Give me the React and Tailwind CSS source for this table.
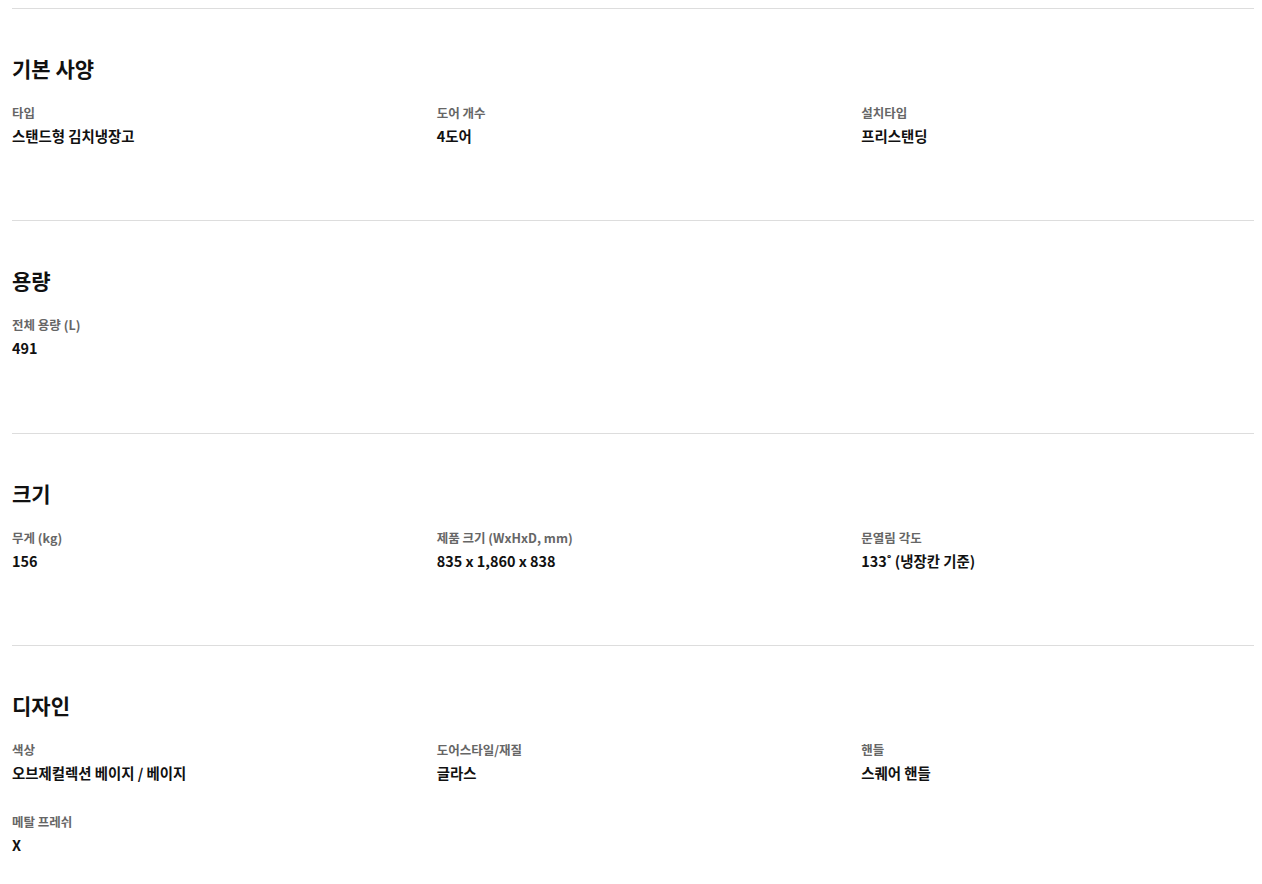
const specs = [
  {
    title: '기본 사양',
    items: [
      ['타입', '스탠드형 김치냉장고'],
      ['도어 개수', '4도어'],
      ['설치타입', '프리스탠딩'],
    ],
  },
  {
    title: '용량',
    items: [['전체 용량 (L)', '491']],
  },
  {
    title: '크기',
    items: [
      ['무게 (kg)', '156'],
      ['제품 크기 (WxHxD, mm)', '835 x 1,860 x 838'],
      ['문열림 각도', '133˚ (냉장칸 기준)'],
    ],
  },
  {
    title: '디자인',
    items: [
      ['색상', '오브제컬렉션 베이지 / 베이지'],
      ['도어스타일/재질', '글라스'],
      ['핸들', '스퀘어 핸들'],
      ['메탈 프레쉬', 'X'],
    ],
  },
]

export default function App() {
  return (
    <div
      className="bg-white pl-3 pr-2 pt-2 text-black"
      style={{ fontFamily: '"Noto Sans CJK KR", "Noto Sans", sans-serif' }}
    >
      {specs.map(section => (
        <section key={section.title} className="border-t border-[#dddddd] pt-[44px] pb-[73.33px]">
          <h2 className="text-[21px] font-bold leading-[30px] text-[#111]">{section.title}</h2>
          <dl className="mt-5 grid grid-cols-3 gap-x-[32px] gap-y-7">
            {section.items.map(([label, value]) => (
              <div key={label}>
                <dt className="text-[12.5px] font-semibold leading-5 text-[#666]">{label}</dt>
                <dd className="mt-[2px] text-[14.4px] font-bold leading-[22px] text-[#111]">{value}</dd>
              </div>
            ))}
          </dl>
        </section>
      ))}
    </div>
  )
}
